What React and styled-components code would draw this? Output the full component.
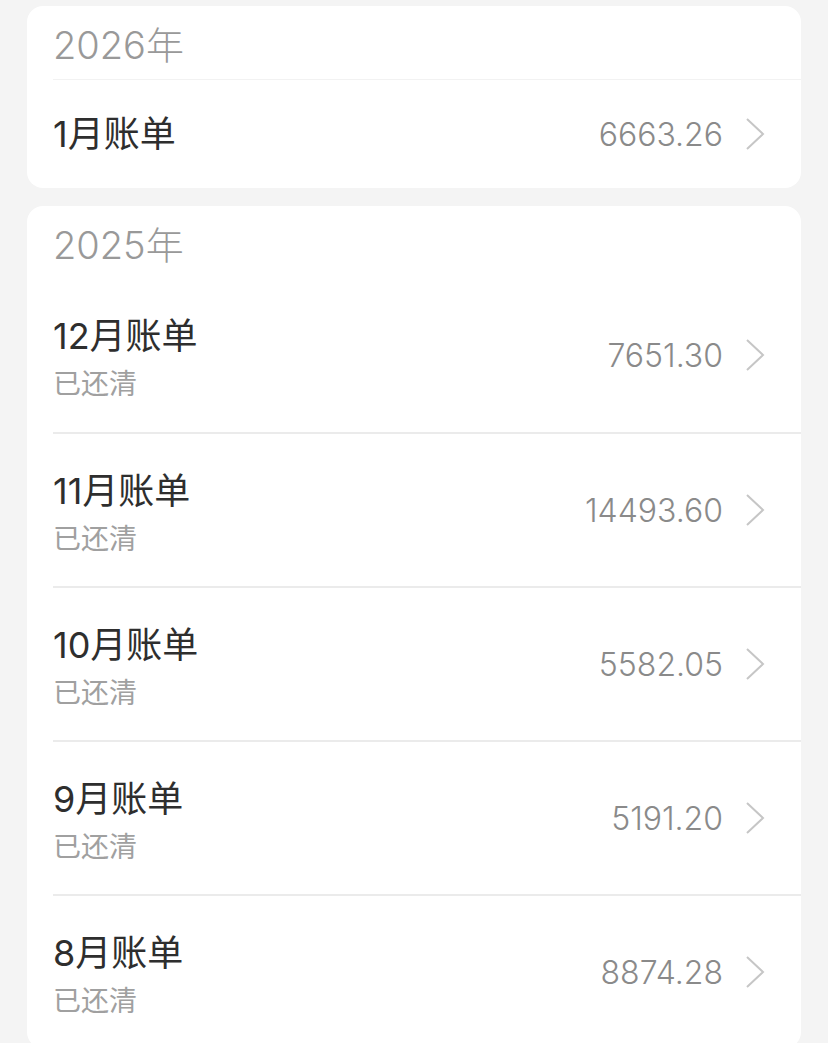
import styled, { createGlobalStyle } from "styled-components";

const GlobalStyle = createGlobalStyle`
  html, body {
    margin: 0;
    padding: 0;
    background: #f4f4f4;
    font-family: Inter, "Noto Sans CJK SC", sans-serif;
  }
`;

const bills = [
  {
    year: "2026年",
    items: [{ name: "1月账单", amount: "6663.26" }],
  },
  {
    year: "2025年",
    items: [
      { name: "12月账单", amount: "7651.30", status: "已还清" },
      { name: "11月账单", amount: "14493.60", status: "已还清" },
      { name: "10月账单", amount: "5582.05", status: "已还清" },
      { name: "9月账单", amount: "5191.20", status: "已还清" },
      { name: "8月账单", amount: "8874.28", status: "已还清" },
    ],
  },
];

const Page = styled.div`
  display: flex;
  flex-direction: column;
  gap: 18px;
  padding: 6px 27px 0;
  height: 1043px;
  overflow: hidden;
  box-sizing: border-box;
`;

const Card = styled.section`
  background: #fff;
  border-radius: 16px;
  padding-left: 26px;
  flex-shrink: 0;
`;

const YearHeader = styled.div`
  height: ${(p) => (p.$divider ? "74px" : "72px")};
  display: flex;
  align-items: center;
  font-size: 38px;
  font-weight: 300;
  color: #999;
  border-bottom: ${(p) => (p.$divider ? "1px solid #f2f2f2" : "none")};
  box-sizing: border-box;
`;

const Row = styled.div`
  display: flex;
  align-items: center;
  height: ${(p) => (p.$tall ? "154px" : "108px")};
  padding-right: 36px;
  box-sizing: border-box;
  & + & {
    border-top: 2px solid #ebebeb;
  }
`;

const Info = styled.div`
  flex: 1;
  display: flex;
  flex-direction: column;
  gap: 9px;
  padding-top: ${(p) => (p.$tall ? "6px" : "0")};
`;

const Title = styled.div`
  font-size: 36px;
  color: #2e2e2e;
  line-height: 42px;
`;

const Status = styled.div`
  font-size: 28px;
  color: #a0a0a0;
  line-height: 36px;
`;

const Amount = styled.div`
  font-size: 32px;
  font-weight: 300;
  color: #8a8a8a;
  margin-right: 22px;
`;

const Chevron = () => (
  <svg width="20" height="34" viewBox="0 0 20 34" fill="none">
    <path d="M2 2 L18 17 L2 32" stroke="#c6c6c6" strokeWidth="2" />
  </svg>
);

export default function App() {
  return (
    <>
      <GlobalStyle />
      <Page>
        {bills.map((group, gi) => (
          <Card key={group.year}>
            <YearHeader $divider={gi === 0}>{group.year}</YearHeader>
            {group.items.map((item) => (
              <Row key={item.name} $tall={!!item.status}>
                <Info $tall={!!item.status}>
                  <Title>{item.name}</Title>
                  {item.status && <Status>{item.status}</Status>}
                </Info>
                <Amount>{item.amount}</Amount>
                <Chevron />
              </Row>
            ))}
          </Card>
        ))}
      </Page>
    </>
  );
}
